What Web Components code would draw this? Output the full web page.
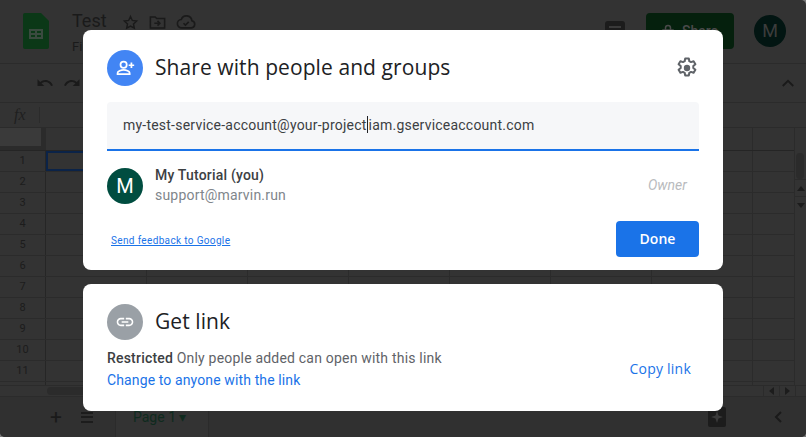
<!DOCTYPE html>
<html>
<head>
<meta charset="utf-8">
<title>Share</title>
<style>
    html, body { margin: 0; padding: 0; background: #777; }
    body { width: 806px; height: 437px; overflow: hidden; font-family: Roboto, "Liberation Sans", sans-serif; }
</style>
</head>
<body>
<sheet-backdrop></sheet-backdrop>
<share-overlay>
    <share-card>
        <icon-circle slot="icon" color="#4285f4">
            <svg width="22" height="22" viewBox="0 0 24 24" fill="none" stroke="#fff" stroke-width="1.9">
                <circle cx="10.500" cy="8.500" r="3.400"/>
                <path d="M3.900 18.600v-1.200c0-2 4-3.400 6.600-3.400s6.600 1.400 6.600 3.400v1.200z"/>
                <path d="M19 6v6M16 9h6"/>
            </svg>
        </icon-circle>
        <span slot="title">Share with people and groups</span>
        <svg slot="action" width="24" height="24" viewBox="0 0 24 24" fill="none">
            <path stroke="#5f6368" stroke-width="2" stroke-linejoin="round" d="M10.200 2.500h3.600l.5 2.700 1.700.9 2.600-.9 1.800 3.100-2.100 1.800v1.800l2.100 1.800-1.800 3.100-2.600-.9-1.700.9-.5 2.700h-3.600l-.5-2.700-1.700-.9-2.600.9-1.800-3.100 2.100-1.800v-1.800l-2.100-1.800 1.800-3.100 2.600.9 1.700-.9z"/>
            <circle cx="12" cy="12" r="3.200" fill="#5f6368"/>
        </svg>
        <share-input value-before="my-test-service-account@your-project" value-after="iam.gserviceaccount.com"></share-input>
        <person-row name="My Tutorial (you)" email="support@marvin.run" role="Owner"></person-row>
        <card-footer></card-footer>
    </share-card>
    <share-card compact>
        <icon-circle slot="icon" color="#9aa0a6">
            <svg width="20" height="20" viewBox="0 0 24 24" fill="#fff">
                <path d="M3.900 12c0-1.710 1.390-3.100 3.100-3.100h4V7H7c-2.760 0-5 2.240-5 5s2.240 5 5 5h4v-1.900H7c-1.710 0-3.100-1.390-3.100-3.100zM8 13h8v-2H8v2zm9-6h-4v1.900h4c1.710 0 3.100 1.390 3.100 3.100s-1.390 3.100-3.100 3.100h-4V17h4c2.760 0 5-2.240 5-5s-2.240-5-5-5z"/>
            </svg>
        </icon-circle>
        <span slot="title">Get link</span>
        <link-row></link-row>
    </share-card>
</share-overlay>

<script>
class SheetBackdrop extends HTMLElement {
    constructor() {
        super();
        this.attachShadow({ mode: 'open' });

        // Row numbers and empty cells of the dimmed sheet
        let rows = '';
        for (let n = 1; n <= 12; n++) {
            let cells = '';
            for (let c = 0; c < 8; c++) {
                cells += `<i class="${n === 1 && c === 0 ? 'sel' : ''}"></i>`;
            }
            rows += `<div class="row"><b>${n < 12 ? n : ''}</b>${cells}</div>`;
        }

        this.shadowRoot.innerHTML = `
            <style>
                :host {
                    display: flex;
                    flex-direction: column;
                    width: 806px;
                    height: 437px;
                    background: #333;
                    color: #1a1a1a;
                    font-family: Roboto, "Liberation Sans", sans-serif;
                    overflow: hidden;
                    border-radius: 0 5px 5px 5px;
                }
                .top {
                    height: 63px;
                    flex: none;
                    display: flex;
                    align-items: flex-start;
                    border-bottom: 1px solid #2b2b2b;
                }
                .logo { margin: 13px 0 0 23px; flex: none; }
                .doc { margin: 9px 0 0 23px; width: 50px; flex: none; }
                .doc div:first-child { font-size: 18px; line-height: 24px; }
                .doc div:last-child { font-size: 13px; line-height: 18px; margin-top: 5px; }
                .doc-icons { display: flex; align-items: center; gap: 9px; margin: 12px 0 0 0; flex: none; height: 20px; }
                .right { margin-left: auto; display: flex; align-items: flex-start; }
                .comment {
                    width: 20px; height: 22px; margin: 21px 21px 0 0; background: #1c1c1c; border-radius: 3px;
                    display: flex; flex-direction: column; align-items: center; gap: 2px; padding-top: 5px; box-sizing: border-box;
                }
                .comment span { width: 12px; height: 2px; background: #3a3a3a; }
                .sharebtn {
                    width: 88px; height: 36px; margin: 13px 20px 0 0;
                    background: #05200d; border-radius: 4px; color: #4a4a4a;
                    font-size: 14px; font-weight: 500; line-height: 36px; text-align: center;
                    display: flex; align-items: center; justify-content: center; gap: 8px;
                }
                .me {
                    width: 32px; height: 32px; margin: 15px 20px 0 0; border-radius: 50%;
                    background: #021512; color: #3c3c3c; font-size: 18px; line-height: 32px; text-align: center;
                }
                .tools {
                    height: 38px; flex: none; display: flex; align-items: center;
                    border-bottom: 1px solid #2b2b2b; padding: 0 9px 0 36px; justify-content: space-between;
                }
                .tools div { display: flex; gap: 9px; }
                .formula {
                    height: 24px; flex: none; display: flex; align-items: center;
                    border-bottom: 1px solid #2b2b2b;
                }
                .formula em {
                    font: italic 16px "Liberation Serif", serif; color: #1f1f1f;
                    margin-left: 14px; padding-right: 13px; border-right: 1px solid #2b2b2b; line-height: 16px;
                }
                .grid-wrap { flex: none; display: flex; height: 257px; }
                .grid { flex: 1; overflow: hidden; }
                .colhead { height: 22px; display: flex; border-bottom: 1px solid #252525; }
                .colhead b { width: 41px; background: #3a3a3a; border-right: 5px solid #2b2b2b; border-bottom: 4px solid #2b2b2b; flex: none; }
                .colhead i { width: 100px; flex: none; border-right: 1px solid #2b2b2b; }
                .row { height: 20px; display: flex; border-bottom: 1px solid #2b2b2b; }
                .row b {
                    width: 45px; flex: none; border-right: 1px solid #262626;
                    font-size: 11px; font-weight: 400; line-height: 20px; text-align: center; color: #1c1c1c;
                }
                .row i { width: 100px; flex: none; border-right: 1px solid #2b2b2b; }
                .row i.sel { box-shadow: inset 0 0 0 2px #0b2348; }
                .vbar { width: 11px; flex: none; border-left: 1px solid #2b2b2b; display: flex; flex-direction: column; }
                .thumb { width: 8px; height: 26px; margin: 25px 0 0 1px; background: #2b2b2b; border-radius: 4px; }
                .arrow {
                    height: 16px; flex: none; border-top: 1px solid #2b2b2b;
                    display: flex; align-items: center; justify-content: center;
                }
                .arrow:first-of-type { margin-top: auto; }
                .arrow svg { display: block; }
                .hbar {
                    height: 12px; flex: none; box-sizing: border-box; border-bottom: 1px solid #2b2b2b; border-top: 1px solid #2b2b2b;
                    padding-left: 47px; display: flex;
                }
                .hbar .track { height: 8px; width: 200px; margin-top: 1px; background: #2b2b2b; border-radius: 4px; }
                .hbar .btn {
                    width: 15px; border-left: 1px solid #2b2b2b;
                    display: flex; align-items: center; justify-content: center;
                }
                .hbar .btn.first { margin-left: auto; }
                .hbar .end { width: 10px; border-left: 1px solid #2b2b2b; }
                .tabs { flex: 1; display: flex; align-items: center; background: #303030; padding-left: 50px; }
                .tabs .plus { font-size: 21px; width: 31px; line-height: 20px; }
                .tabs .list { width: 12px; height: 11px; border-top: 2px solid #1c1c1c; border-bottom: 2px solid #1c1c1c; position: relative; margin-right: 22px; box-sizing: border-box; }
                .tabs .list::after { content: ""; position: absolute; left: 0; right: 0; top: 2.500px; height: 2px; background: #1c1c1c; }
                .tabs .page { width: 94px; height: 40px; line-height: 40px; font-size: 14px; background: #333; color: #0f2a1e; padding-left: 17px; box-sizing: border-box; border-left: 1px solid #2b2b2b; border-right: 1px solid #2b2b2b; }
                .tabs .explore { margin-left: auto; margin-right: 46px; width: 18px; height: 20px; background: #1c1c1c; border-radius: 2px; display: flex; align-items: center; justify-content: center; }
                .tabs .back { margin-right: 22px; }
            </style>
            <div class="top">
                <svg class="logo" width="26" height="36" viewBox="0 0 26 36">
                    <path fill="#0b3817" d="M2 0h16l8 8v26a2 2 0 0 1-2 2H2a2 2 0 0 1-2-2V2a2 2 0 0 1 2-2z"/>
                    <path fill="#3a4a3f" d="M6 16h14v10H6zM8 18v2h4v-2zM14 18v2h4v-2zM8 22v2h4v-2zM14 22v2h4v-2z" fill-rule="evenodd"/>
                </svg>
                <div class="doc"><div>Test</div><div>Fi</div></div>
                <div class="doc-icons">
                    <svg width="17" height="17" viewBox="0 0 24 24" fill="none" stroke="#1a1a1a" stroke-width="2"><path d="M12 3.500l2.600 5.600 6.100.7-4.500 4.200 1.200 6-5.400-3-5.400 3 1.200-6-4.500-4.200 6.100-.7z"/></svg>
                    <svg width="19" height="19" viewBox="0 0 24 24" fill="none" stroke="#1a1a1a" stroke-width="2"><path d="M3 5h6l2 2h10v12H3zM8 13h7M12 10l3 3-3 3"/></svg>
                    <svg width="20" height="20" viewBox="0 0 24 24" fill="none" stroke="#1a1a1a" stroke-width="2"><path d="M7 19a5 5 0 0 1-.6-10A6.500 6.500 0 0 1 19 10.500a4.300 4.300 0 0 1-.5 8.500zM9 13.500l2.300 2.300 4-4"/></svg>
                </div>
                <div class="right">
                    <div class="comment"><span></span><span></span></div>
                    <div class="sharebtn">
                        <svg width="12" height="14" viewBox="0 0 12 14" fill="none" stroke="#4a4a4a" stroke-width="1.500"><rect x="1" y="6" width="10" height="7"/><path d="M3.500 6V4a2.500 2.500 0 0 1 5 0v2"/></svg>
                        <span>Share</span>
                    </div>
                    <div class="me">M</div>
                </div>
            </div>
            <div class="tools">
                <div>
                    <svg width="18" height="18" viewBox="0 0 24 24" fill="#1a1a1a"><path d="M12.500 8c-2.650 0-5.050 1-6.900 2.600L2 7v9h9l-3.620-3.620c1.390-1.160 3.160-1.880 5.120-1.880 3.540 0 6.550 2.310 7.600 5.500l2.370-.78C21.080 11.030 17.150 8 12.500 8z"/></svg>
                    <svg width="18" height="18" viewBox="0 0 24 24" fill="#1a1a1a"><path d="M18.400 10.600C16.550 9 14.150 8 11.500 8c-4.650 0-8.580 3.030-9.960 7.220L3.900 16c1.050-3.190 4.050-5.500 7.600-5.500 1.950 0 3.730.72 5.120 1.880L13 16h9V7z"/></svg>
                </div>
                <svg width="18" height="18" viewBox="0 0 24 24" fill="none" stroke="#1a1a1a" stroke-width="2.500"><path d="M5 16l7-7 7 7"/></svg>
            </div>
            <div class="formula"><em>fx</em></div>
            <div class="grid-wrap">
                <div class="grid">
                    <div class="colhead"><b></b><i></i><i></i><i></i><i></i><i></i><i></i><i></i></div>
                    ${rows}
                </div>
                <div class="vbar">
                    <div class="thumb"></div>
                    <div class="arrow"><svg width="8" height="5" viewBox="0 0 8 5" fill="#1c1c1c"><path d="M4 0l4 5H0z"/></svg></div>
                    <div class="arrow"><svg width="8" height="5" viewBox="0 0 8 5" fill="#1c1c1c"><path d="M0 0h8L4 5z"/></svg></div>
                </div>
            </div>
            <div class="hbar">
                <div class="track"></div>
                <div class="btn first"><svg width="5" height="8" viewBox="0 0 5 8" fill="#1c1c1c"><path d="M5 0v8L0 4z"/></svg></div>
                <div class="btn"><svg width="5" height="8" viewBox="0 0 5 8" fill="#1c1c1c"><path d="M0 0v8l5-4z"/></svg></div>
                <div class="end"></div>
            </div>
            <div class="tabs">
                <span class="plus">+</span>
                <span class="list"></span>
                <span class="page">Page 1 &#9662;</span>
                <span class="explore"><svg width="12" height="12" viewBox="0 0 12 12" fill="#3a3a3a"><path d="M6 0l1.500 4.500L12 6 7.500 7.500 6 12 4.500 7.500 0 6l4.500-1.500z"/></svg></span>
                <svg class="back" width="12" height="14" viewBox="0 0 12 14" fill="none" stroke="#1a1a1a" stroke-width="2"><path d="M9 2L4 7l5 5"/></svg>
            </div>
        `;
    }
}

class ShareOverlay extends HTMLElement {
    constructor() {
        super();
        this.attachShadow({ mode: 'open' });
        this.shadowRoot.innerHTML = `
            <style>
                /* sits on top of the dimmed sheet */
                :host {
                    position: absolute;
                    left: 83px;
                    top: 30px;
                    width: 640px;
                    display: flex;
                    flex-direction: column;
                    gap: 14px;
                }
            </style>
            <slot></slot>
        `;
    }
}

class ShareCard extends HTMLElement {
    constructor() {
        super();
        this.attachShadow({ mode: 'open' });
        this.shadowRoot.innerHTML = `
            <style>
                :host {
                    display: block;
                    background: #fff;
                    border-radius: 8px;
                    padding: 20px 24px 13px;
                    height: 240px;
                    box-sizing: border-box;
                    color: #202124;
                    font-family: Roboto, "Liberation Sans", sans-serif;
                }
                :host([compact]) { height: 127px; }
                header {
                    display: flex;
                    align-items: center;
                    height: 36px;
                    gap: 12px;
                }
                .title {
                    font-family: "Open Sans", Roboto, sans-serif;
                    font-size: 21px;
                    letter-spacing: .08px;
                    flex: 1;
                    padding-bottom: 2px;
                }
            </style>
            <header>
                <slot name="icon"></slot>
                <div class="title"><slot name="title"></slot></div>
                <slot name="action"></slot>
            </header>
            <slot></slot>
        `;
    }
}

class IconCircle extends HTMLElement {
    constructor() {
        super();
        this.attachShadow({ mode: 'open' });
        this.shadowRoot.innerHTML = `
            <style>
                :host {
                    width: 36px;
                    height: 36px;
                    border-radius: 50%;
                    display: flex;
                    align-items: center;
                    justify-content: center;
                    flex: none;
                }
            </style>
            <slot></slot>
        `;
        this.style.background = this.getAttribute('color');
    }
}

class ShareInput extends HTMLElement {
    constructor() {
        super();
        this.attachShadow({ mode: 'open' });
        this.shadowRoot.innerHTML = `
            <style>
                :host {
                    display: flex;
                    align-items: center;
                    height: 49px;
                    margin-top: 16px;
                    padding: 0 16px 2px;
                    box-sizing: border-box;
                    background: #f6f7f9;
                    border-bottom: 2px solid #1a73e8;
                    border-radius: 4px 4px 0 0;
                    font-size: 14px;
                    letter-spacing: .22px;
                    color: #3c4043;
                    white-space: nowrap;
                }
                .caret {
                    display: inline-block;
                    width: 1px;
                    height: 17px;
                    background: #202124;
                    margin-right: 1px;
                }
            </style>
            <span>${this.getAttribute('value-before')}</span><span class="caret"></span><span>${this.getAttribute('value-after')}</span>
        `;
    }
}

class PersonRow extends HTMLElement {
    constructor() {
        super();
        this.attachShadow({ mode: 'open' });
        this.shadowRoot.innerHTML = `
            <style>
                :host {
                    display: flex;
                    align-items: center;
                    gap: 12px;
                    height: 36px;
                    margin-top: 17px;
                }
                .avatar {
                    width: 36px;
                    height: 36px;
                    border-radius: 50%;
                    background: #004d40;
                    color: #fff;
                    font-size: 20px;
                    line-height: 36px;
                    text-align: center;
                    flex: none;
                }
                .info { flex: 1; font-size: 14px; line-height: 20px; letter-spacing: .2px; padding-bottom: 2px; }
                .name { font-weight: 500; color: #3c4043; }
                .email { color: #80868b; }
                .role { font-style: italic; font-size: 14px; letter-spacing: .05px; color: #b9bbbe; margin: 0 12px 2px 0; }
            </style>
            <div class="avatar">M</div>
            <div class="info">
                <div class="name">${this.getAttribute('name')}</div>
                <div class="email">${this.getAttribute('email')}</div>
            </div>
            <div class="role">${this.getAttribute('role')}</div>
        `;
    }
}

class CardFooter extends HTMLElement {
    constructor() {
        super();
        this.attachShadow({ mode: 'open' });
        this.shadowRoot.innerHTML = `
            <style>
                :host {
                    display: flex;
                    align-items: center;
                    justify-content: space-between;
                    margin-top: 17px;
                    height: 36px;
                }
                a {
                    font-size: 10px;
                    letter-spacing: .35px;
                    color: #1a73e8;
                    text-decoration: underline;
                    margin: 2px 0 0 4px;
                }
                button {
                    all: unset;
                    width: 83px;
                    height: 36px;
                    background: #1a73e8;
                    border-radius: 4px;
                    color: #fff;
                    font-family: "Open Sans", Roboto, sans-serif;
                    font-size: 14px;
                    font-weight: 600;
                    text-align: center;
                    line-height: 36px;
                }
            </style>
            <a href="#">Send feedback to Google</a>
            <button>Done</button>
        `;
    }
}

class LinkRow extends HTMLElement {
    constructor() {
        super();
        this.attachShadow({ mode: 'open' });
        this.shadowRoot.innerHTML = `
            <style>
                :host {
                    display: flex;
                    align-items: center;
                    justify-content: space-between;
                    margin-top: 7px;
                    font-size: 14px;
                    line-height: 22px;
                    letter-spacing: .2px;
                }
                .msg { color: #5f6368; }
                b { font-weight: 500; color: #3c4043; }
                a { color: #1a73e8; text-decoration: none; display: block; letter-spacing: .12px; }
                .copy { font-family: "Open Sans", Roboto, sans-serif; font-size: 14px; letter-spacing: .22px; margin-right: 8px; }
            </style>
            <div>
                <div class="msg"><b>Restricted</b> Only people added can open with this link</div>
                <a href="#">Change to anyone with the link</a>
            </div>
            <a class="copy" href="#">Copy link</a>
        `;
    }
}

customElements.define('sheet-backdrop', SheetBackdrop);
customElements.define('share-overlay', ShareOverlay);
customElements.define('share-card', ShareCard);
customElements.define('icon-circle', IconCircle);
customElements.define('share-input', ShareInput);
customElements.define('person-row', PersonRow);
customElements.define('card-footer', CardFooter);
customElements.define('link-row', LinkRow);
</script>
</body>
</html>
